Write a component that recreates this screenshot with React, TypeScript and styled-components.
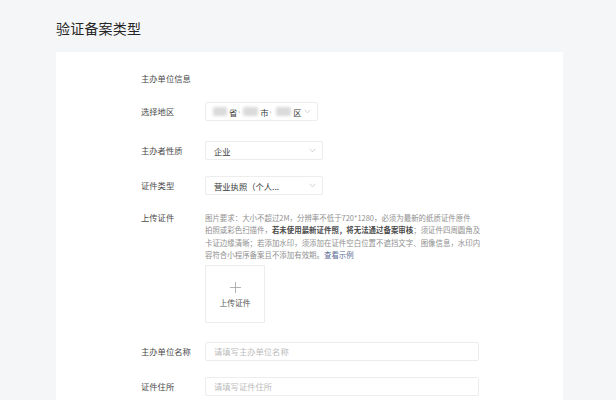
import React from 'react';
import styled, { createGlobalStyle } from 'styled-components';

const GlobalStyle = createGlobalStyle`
	html, body {
		margin: 0;
		padding: 0;
		background: #f5f6f8;
		font-family: "Noto Sans CJK SC", "Noto Sans", sans-serif;
	}
`;

const Page = styled.div`
	width: 616px;
	height: 400px;
	overflow: hidden;
	padding: 0 53px 0 56px;
	box-sizing: border-box;
`;

const Title = styled.h1`
	margin: 0;
	padding-top: 18px;
	height: 52px;
	box-sizing: border-box;
	font-size: 14px;
	line-height: 20px;
	font-weight: 400;
	color: #262626;
	letter-spacing: 0.2px;
`;

const Card = styled.div`
	background: #fff;
	padding: 20px 0 40px 85px;
	min-height: 400px;
`;

const Section = styled.div`
	font-size: 8.3px;
	line-height: 12px;
	color: #4a4a4a;
	margin-bottom: 18px;
`;

const Row = styled.div<{ $gap: number; $top?: boolean }>`
	display: flex;
	align-items: ${p => (p.$top ? 'flex-start' : 'center')};
	margin-bottom: ${p => p.$gap}px;
`;

const Label = styled.div`
	width: 64px;
	flex-shrink: 0;
	font-size: 8.3px;
	line-height: 12.5px;
	color: #4a4a4a;
`;

const Box = styled.div<{ $w: number }>`
	width: ${p => p.$w}px;
	height: 19px;
	box-sizing: border-box;
	border: 1px solid #ededed;
	border-radius: 2px;
	display: flex;
	align-items: center;
	padding: 0 6px 0 8px;
	font-size: 8.3px;
	color: #3a3a3a;
`;

const Value = styled.span`
	flex: 1;
	white-space: nowrap;
`;

const Placeholder = styled.span`
	color: #bcbcbc;
`;

const Blur = styled.span<{ $w: number }>`
	display: inline-block;
	width: ${p => p.$w}px;
	height: 9px;
	margin-right: 2px;
	background: #dadada;
	filter: blur(1.5px);
	border-radius: 2px;
`;

const Region = styled.span`
	flex: 1;
	display: flex;
	align-items: center;
	white-space: nowrap;
	margin-left: -1px;
`;

const Sep = styled.span<{ $after: number }>`
	color: #9a9a9a;
	font-size: 6px;
	margin: 0 ${p => p.$after}px 0 1px;
`;

const Chevron = () => (
	<svg width="7" height="5" viewBox="0 0 7 5" fill="none">
		<path d="M0.6 0.8 L3.5 3.8 L6.4 0.8" stroke="#c4c4c4" strokeWidth="0.8" />
	</svg>
);

const Upload = styled.div`
	width: 280px;
`;

const Desc = styled.p`
	margin: 0;
	font-size: 7.45px;
	line-height: 12.5px;
	color: #8f8f8f;
	white-space: nowrap;
	margin-top: 0.5px;

	b {
		color: #4a4a4a;
		font-weight: 700;
	}

	a {
		color: #5a6a94;
		text-decoration: none;
	}
`;

const UploadBox = styled.div`
	margin-top: 3px;
	width: 60px;
	height: 58px;
	box-sizing: border-box;
	border: 1px solid #ededed;
	display: flex;
	flex-direction: column;
	align-items: center;
	justify-content: center;
	gap: 4px;
	padding-top: 2px;
	font-size: 7.8px;
	color: #555;
`;

const Plus = () => (
	<svg width="11" height="11" viewBox="0 0 11 11">
		<path d="M5.5 0 V11 M0 5.5 H11" stroke="#a0a0a0" strokeWidth="0.8" />
	</svg>
);

export default function App() {
	return (
		<>
			<GlobalStyle />
			<Page>
				<Title>验证备案类型</Title>
				<Card>
					<Section>主办单位信息</Section>

					<Row $gap={20}>
						<Label>选择地区</Label>
						<Box $w={113}>
							<Region>
								<Blur $w={14} />
								<span>省</span>
								<Sep $after={3}>›</Sep>
								<Blur $w={15} />
								<span>市</span>
								<Sep $after={5}>›</Sep>
								<Blur $w={15} />
								<span>区</span>
							</Region>
							<Chevron />
						</Box>
					</Row>

					<Row $gap={16}>
						<Label>主办者性质</Label>
						<Box $w={118}>
							<Value>企业</Value>
							<Chevron />
						</Box>
					</Row>

					<Row $gap={16}>
						<Label>证件类型</Label>
						<Box $w={118}>
							<Value>营业执照（个人...</Value>
							<Chevron />
						</Box>
					</Row>

					<Row $gap={19} $top>
						<Label>上传证件</Label>
						<Upload>
							<Desc>
								图片要求：大小不超过2M，分辨率不低于720*1280，必须为最新的纸质证件原件
								<br />
								拍照或彩色扫描件，<b>若未使用最新证件照，将无法通过备案审核</b>；须证件四周圆角及
								<br />
								卡证边缘清晰；若添加水印，须添加在证件空白位置不遮挡文字、图像信息，水印内
								<br />
								容符合小程序备案且不添加有效期。<a>查看示例</a>
							</Desc>
							<UploadBox>
								<Plus />
								<span>上传证件</span>
							</UploadBox>
						</Upload>
					</Row>

					<Row $gap={16}>
						<Label>主办单位名称</Label>
						<Box $w={274}>
							<Placeholder>请填写主办单位名称</Placeholder>
						</Box>
					</Row>

					<Row $gap={16}>
						<Label>证件住所</Label>
						<Box $w={274}>
							<Placeholder>请填写证件住所</Placeholder>
						</Box>
					</Row>
				</Card>
			</Page>
		</>
	);
}
